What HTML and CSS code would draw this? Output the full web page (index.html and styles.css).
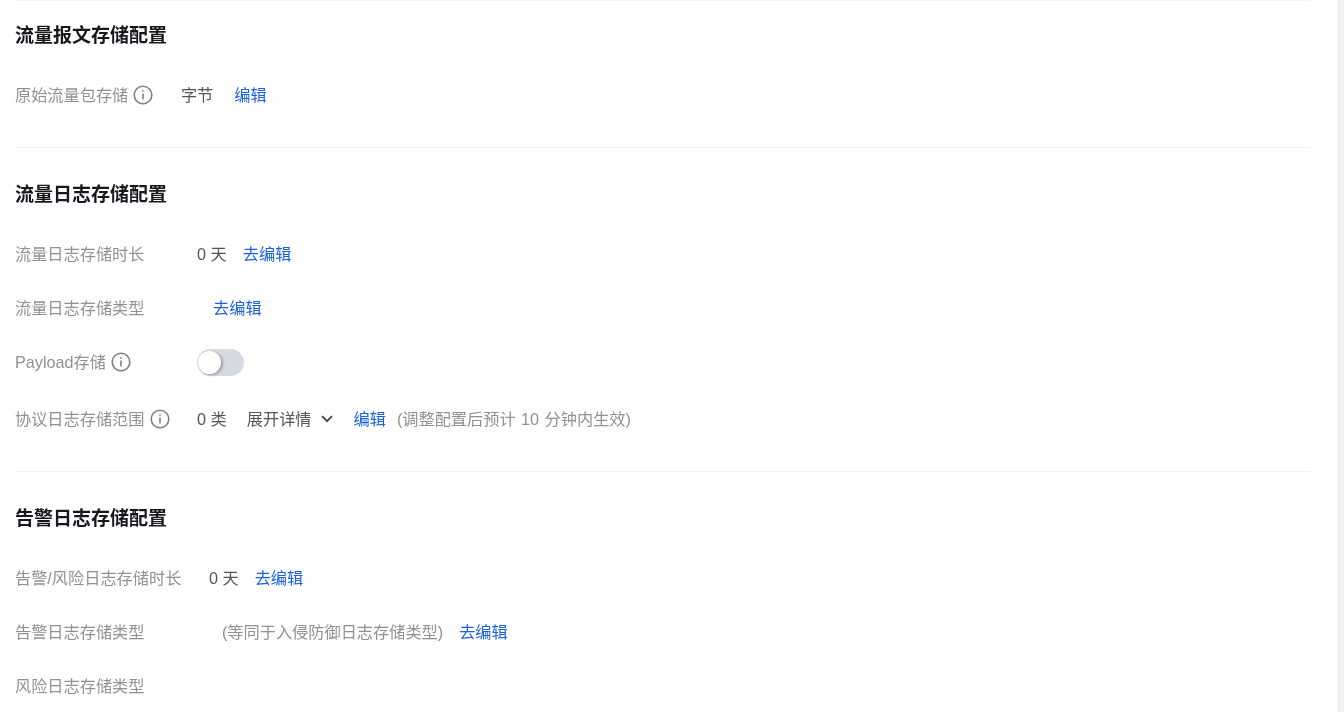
FILE: index.html
```html
<!DOCTYPE html>
<html lang="zh-CN">
<head>
<meta charset="utf-8">
<title>存储配置</title>
<link rel="stylesheet" href="styles.css">
</head>
<body>
<div class="page">
  <main class="content">
    <section class="section section-first">
      <h2 class="title">流量报文存储配置</h2>
      <div class="grid">
        <div class="label">原始流量包存储<svg class="info" viewBox="0 0 20 20"><circle cx="10" cy="10" r="8.8"/><path d="M10 8.6v6"/><path d="M10 5.2v1.6"/></svg></div>
        <div class="value value-first"><span class="text">字节</span><a class="link">编辑</a></div>
      </div>
    </section>
    <section class="section">
      <h2 class="title">流量日志存储配置</h2>
      <div class="grid">
        <div class="label">流量日志存储时长</div>
        <div class="value"><span class="text">0 天</span><a class="link">去编辑</a></div>
        <div class="label">流量日志存储类型</div>
        <div class="value"><span class="text"></span><a class="link">去编辑</a></div>
        <div class="label">Payload存储<svg class="info" viewBox="0 0 20 20"><circle cx="10" cy="10" r="8.8"/><path d="M10 8.6v6"/><path d="M10 5.2v1.6"/></svg></div>
        <div class="value"><span class="switch"><span class="knob"></span></span></div>
        <div class="label label-tall">协议日志存储范围<svg class="info" viewBox="0 0 20 20"><circle cx="10" cy="10" r="8.8"/><path d="M10 8.6v6"/><path d="M10 5.2v1.6"/></svg></div>
        <div class="value value-tall"><span class="text">0 类</span><span class="expand">展开详情<svg class="chev" viewBox="0 0 12 8"><path d="M1 1.2l5 5 5-5"/></svg></span><a class="link link-wide">编辑</a><span class="note note-after">(调整配置后预计 10 分钟内生效)</span></div>
      </div>
    </section>
    <section class="section section-last">
      <h2 class="title">告警日志存储配置</h2>
      <div class="grid">
        <div class="label">告警/风险日志存储时长</div>
        <div class="value"><span class="text">0 天</span><a class="link">去编辑</a></div>
        <div class="label">告警日志存储类型</div>
        <div class="value"><span class="note note-before">(等同于入侵防御日志存储类型)</span><a class="link">去编辑</a></div>
        <div class="label">风险日志存储类型</div>
        <div class="value"></div>
      </div>
    </section>
  </main>
  <div class="scrollbar"></div>
</div>
</body>
</html>
```
FILE: styles.css
```css
* { box-sizing: border-box; }
html, body { margin: 0; height: 100%; overflow: hidden; background: #fff; }
body {
  font-family: "Liberation Sans", "Noto Sans CJK SC", sans-serif;
  font-size: 16.2px;
  line-height: 26px;
  color: #555;
}
.page { display: flex; height: 712px; }
.content { flex: 1; min-width: 0; padding-right: 27px; padding-left: 15px; filter: blur(0.35px); }
.section { border-top: 1px solid #f3f3f3; height: 324px; padding-top: 33px; }
.section:first-child { height: 147px; padding-top: 21px; border-top-color: #f3f6fd; }
.section-last { height: 241px; }
.title { margin: 0 0 18px; font-size: 19px; line-height: 28px; font-weight: 700; color: #16181d; }
.grid { display: grid; grid-template-columns: max-content 1fr; column-gap: 27.6px; }
.label, .value { display: flex; align-items: center; height: 54px; }
.label { color: #919191; }
.info { width: 20px; height: 20px; margin-left: 5px; fill: none; stroke: #808080; stroke-width: 1.6; }
.value { gap: 16px; }
.value-first { gap: 21px; }
.label-tall, .value-tall { height: 60px; }
.link { color: #1a62e0; }
.note { color: #919191; }
.expand { display: flex; align-items: center; gap: 9px; margin-left: 4px; }
.chev { width: 12px; height: 8px; fill: none; stroke: #444; stroke-width: 1.8; }
.link-wide { margin-left: 5px; }
.note-after { margin-left: -5px; word-spacing: 1px; }
.note-before { margin-left: 13px; }
.switch { display: block; position: relative; width: 47px; height: 27px; border-radius: 14px; background: #d5dae3; }
.knob { position: absolute; left: 1px; top: 2px; width: 23px; height: 23px; border-radius: 50%; background: #fff; box-shadow: 2px 1px 3px rgba(0,0,0,.28); }
.scrollbar { width: 6px; flex: none; background: #f2f2f2; border-left: 1px solid #e6e6e6; }
```
